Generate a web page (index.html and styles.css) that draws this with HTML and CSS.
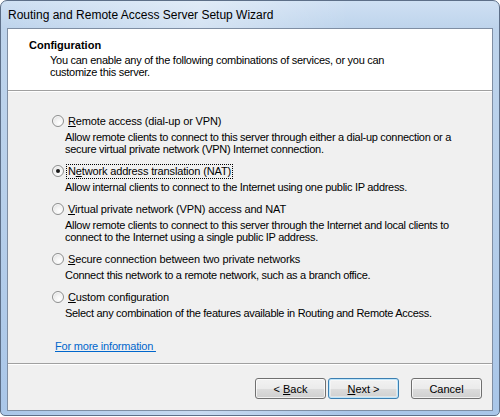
FILE: index.html
```html
<!DOCTYPE html>
<html>
<head>
<meta charset="utf-8">
<link rel="stylesheet" href="styles.css">
</head>
<body>
<div class="window">
  <div class="titlebar">Routing and Remote Access Server Setup Wizard</div>
  <div class="client">
    <div class="header">
      <div class="h-title">Configuration</div>
      <div class="h-sub">You can enable any of the following combinations of services, or you can<br>customize this server.</div>
    </div>
    <div class="content">
      <div class="option">
        <div class="choice"><span class="radio"></span><span class="label"><u>R</u>emote access (dial-up or VPN)</span></div>
        <p class="desc">Allow remote clients to connect to this server through either a dial-up connection or a<br>secure virtual private network (VPN) Internet connection.</p>
      </div>
      <div class="option">
        <div class="choice"><span class="radio checked"></span><span class="label focus">N<u>e</u>twork address translation (NAT)</span></div>
        <p class="desc">Allow internal clients to connect to the Internet using one public IP address.</p>
      </div>
      <div class="option">
        <div class="choice"><span class="radio"></span><span class="label"><u>V</u>irtual private network (VPN) access and NAT</span></div>
        <p class="desc">Allow remote clients to connect to this server through the Internet and local clients to<br>connect to the Internet using a single public IP address.</p>
      </div>
      <div class="option">
        <div class="choice"><span class="radio"></span><span class="label"><u>S</u>ecure connection between two private networks</span></div>
        <p class="desc">Connect this network to a remote network, such as a branch office.</p>
      </div>
      <div class="option">
        <div class="choice"><span class="radio"></span><span class="label"><u>C</u>ustom configuration</span></div>
        <p class="desc">Select any combination of the features available in Routing and Remote Access.</p>
      </div>
      <a class="more" href="#">For more information </a>
    </div>
    <div class="footer">
      <button class="btn">&lt; <u>B</u>ack</button>
      <button class="btn default"><u>N</u>ext &gt;</button>
      <button class="btn cancel">Cancel</button>
    </div>
  </div>
</div>
</body>
</html>
```
FILE: styles.css
```css
html, body {
  margin: 0;
  padding: 0;
  background: #ffffff;
}
body {
  width: 500px;
  height: 417px;
  overflow: hidden;
  font-family: "Liberation Sans", Arial, sans-serif;
  font-size: 11px;
  color: #000;
}
.window {
  box-sizing: border-box;
  width: 500px;
  height: 416px;
  border: 1px solid #5d6f88;
  border-radius: 7px 7px 5px 5px;
  padding: 0 6px 4px 6px;
  background:
    linear-gradient(to right, rgba(255,255,255,0) 0, rgba(255,255,255,0.35) 40%, rgba(255,255,255,0) 70%),
    linear-gradient(to bottom, #cfe0f3 0, #bed4ec 27px, #b7cfea 200px, #a9c6e8 416px);
  display: flex;
  flex-direction: column;
}
.titlebar {
  height: 27px;
  box-sizing: border-box;
  padding: 6px 0 0 1px;
  line-height: 16px;
  font-family: "Liberation Sans", Arial, sans-serif;
  font-size: 12px;
  color: #000;
}
.client {
  flex: 1;
  border: 1px solid #7f8ea3;
  background: #f0f0f0;
  display: flex;
  flex-direction: column;
}
.header {
  height: 62px;
  box-sizing: border-box;
  background: #ffffff;
  border-bottom: 1px solid #a0a0a0;
  box-shadow: 0 1px 0 #ffffff;
  padding: 10px 0 0 21px;
}
.h-title {
  font-weight: bold;
  line-height: 13px;
}
.h-sub {
  margin-top: 2px;
  padding-left: 21px;
  line-height: 12px;
  letter-spacing: -0.27px;
}
.content {
  flex: 1;
  padding: 22px 0 0 44px;
}
.option {
  margin-bottom: 8px;
}
.choice {
  display: flex;
  align-items: center;
  height: 16px;
}
.radio {
  box-sizing: border-box;
  width: 12px;
  height: 12px;
  border-radius: 50%;
  border: 1px solid #8e8f8f;
  background: radial-gradient(circle at 65% 70%, #ffffff 0, #f2f2f2 45%, #d4d4d4 100%);
  box-shadow: inset 0 0 0 1px #fafafa;
  position: relative;
}
.radio.checked::after {
  content: "";
  position: absolute;
  left: 3px;
  top: 3px;
  width: 4px;
  height: 4px;
  border-radius: 50%;
  background: #1a1a1a;
}
.label {
  margin-left: 2px;
  padding: 0 1px;
  border: 1px dotted transparent;
  line-height: 13px;
  letter-spacing: -0.15px;
}
.label.focus {
  border-color: #000;
}
.desc {
  margin: 2px 0 0 13px;
  line-height: 12px;
  letter-spacing: -0.3px;
}
.more {
  display: inline-block;
  margin: 13px 0 0 3px;
  color: #0066cc;
  line-height: 12px;
  white-space: pre;
  letter-spacing: -0.2px;
}
.footer {
  height: 47px;
  box-sizing: border-box;
  border-top: 1px solid #a0a0a0;
  box-shadow: inset 0 1px 0 #ffffff;
  padding: 14px 10px 0 0;
  display: flex;
  justify-content: flex-end;
  align-items: flex-start;
  gap: 2px;
}
.btn {
  box-sizing: border-box;
  width: 71px;
  height: 21px;
  margin: 0;
  padding: 0;
  font-family: "Liberation Sans", Arial, sans-serif;
  font-size: 11px;
  color: #000;
  border: 1px solid #707070;
  border-radius: 3px;
  background: linear-gradient(to bottom, #f2f2f2 0, #ebebeb 50%, #dddddd 50%, #cfcfcf 100%);
  box-shadow: inset 0 0 0 1px rgba(255,255,255,0.7);
}
.btn.default {
  border-color: #3c7fb1;
  box-shadow: inset 0 0 0 1px #bfe6fb, inset 0 0 0 2px rgba(255,255,255,0.4);
}
.btn.cancel {
  margin-left: 10px;
}
```
